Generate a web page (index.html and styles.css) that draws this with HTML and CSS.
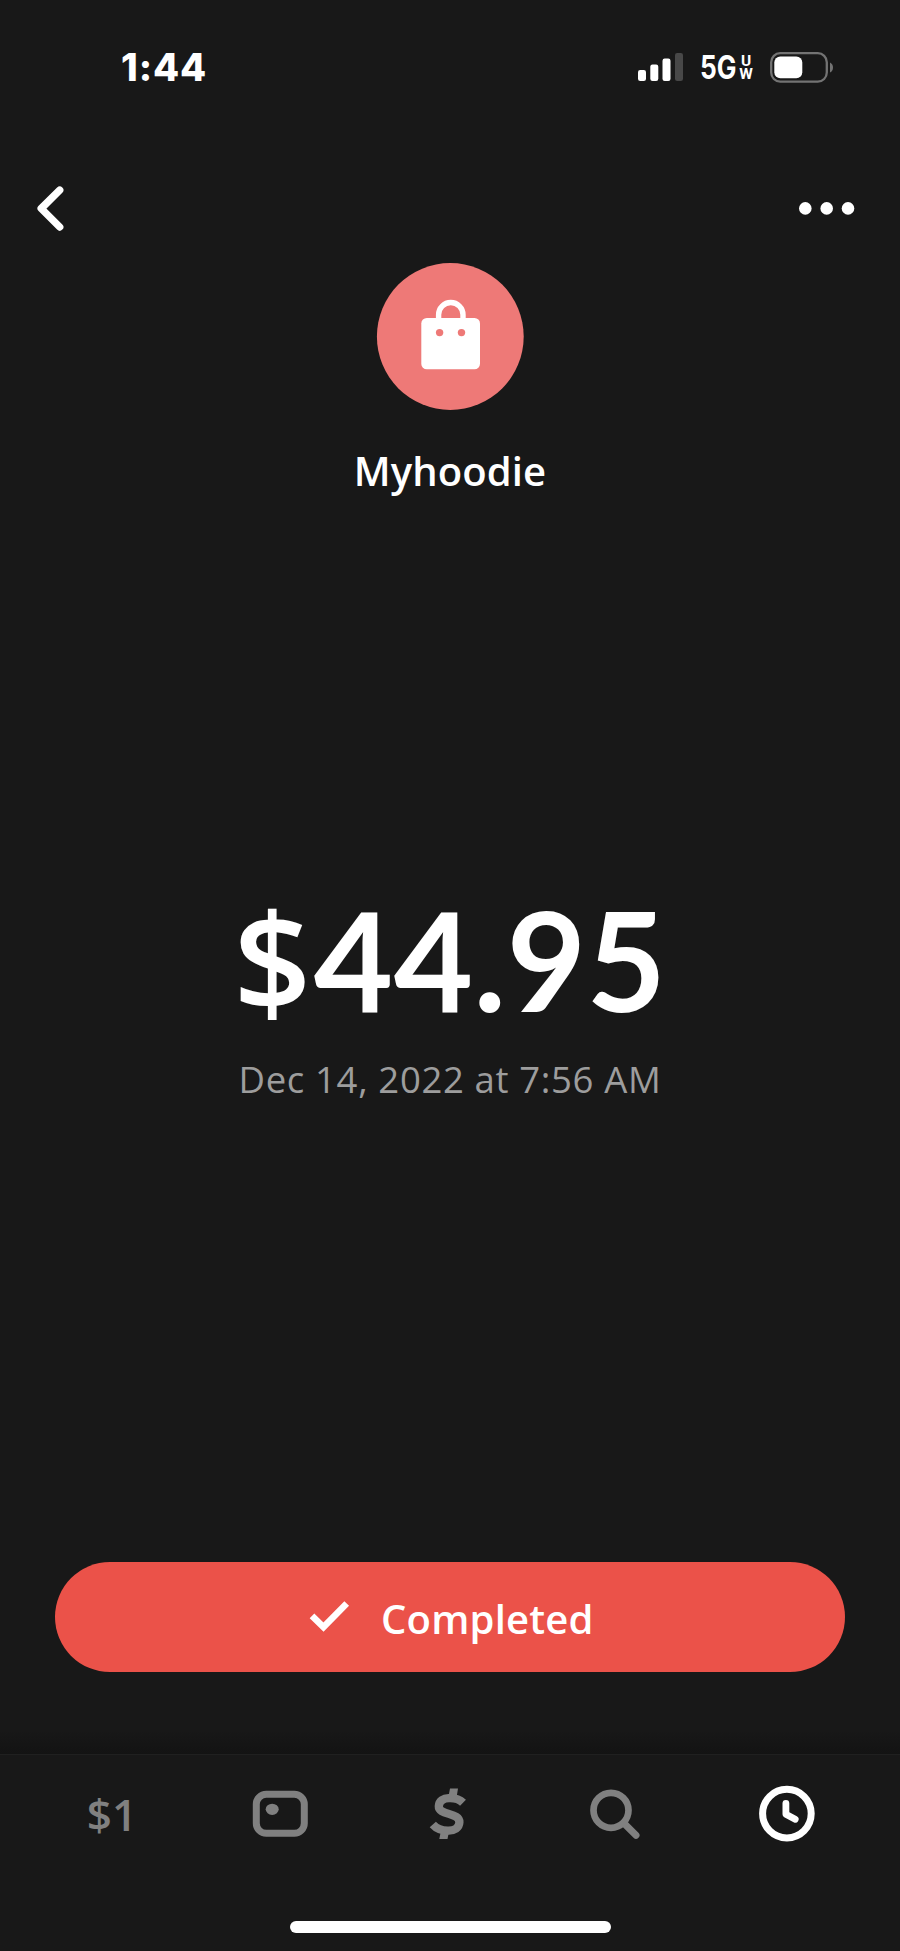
FILE: index.html
```html
<!DOCTYPE html>
<html lang="en">
<head>
<meta charset="utf-8">
<meta name="viewport" content="width=device-width, initial-scale=1">
<title>Payment details</title>
<link rel="stylesheet" href="styles.css">
</head>
<body>
<div class="screen">
  <header class="status">
    <span class="time">1:44</span>
    <div class="indicators">
      <svg class="signal" width="46" height="30" viewBox="0 0 46 30" fill="#fff">
        <rect x="0" y="18" width="8" height="11" rx="2.2"/>
        <rect x="12.3" y="12.5" width="8" height="16.5" rx="2.2"/>
        <rect x="24.5" y="6.5" width="8" height="22.5" rx="2.2"/>
        <rect x="37" y="1" width="8" height="28" rx="2.2" fill="#484848"/>
      </svg>
      <div class="network"><span class="gen">5G</span><span class="uw"><span>U</span><span>W</span></span></div>
      <svg class="battery" width="64" height="32" viewBox="0 0 64 32">
        <rect x="1.2" y="2.2" width="55.6" height="28.4" rx="9" fill="none" stroke="#737373" stroke-width="2.3"/>
        <rect x="4.3" y="5.5" width="28" height="21.8" rx="6" fill="#fff"/>
        <path d="M60 11.5q3 1.5 3 5t-3 5z" fill="#737373"/>
      </svg>
    </div>
  </header>
  <nav class="topbar">
    <svg width="40" height="52" viewBox="30 182 40 52"><path d="M59.7 190.2 41.2 208.5 59.7 227" fill="none" stroke="#fff" stroke-width="7.4" stroke-linecap="round" stroke-linejoin="round"/></svg>
    <svg width="60" height="52" viewBox="797 182 60 52" fill="#fff"><circle cx="805.3" cy="208.4" r="6.3"/><circle cx="826.7" cy="208.4" r="6.3"/><circle cx="848" cy="208.4" r="6.3"/></svg>
  </nav>
  <main class="details">
    <svg class="avatar" width="148" height="148" viewBox="376 262 148 148">
      <circle cx="450.3" cy="336.5" r="73.4" fill="#ee7977"/>
      <path d="M438.6 321v-6.3a12.2 12.2 0 0 1 24.4 0v6.3" fill="none" stroke="#fff" stroke-width="5.4"/>
      <rect x="421.3" y="318" width="58.7" height="51.3" rx="5.5" fill="#fff"/>
      <circle cx="439.6" cy="332.6" r="3.7" fill="#ee7977"/><circle cx="461.5" cy="332.6" r="3.7" fill="#ee7977"/>
    </svg>
    <h1 class="merchant">Myhoodie</h1>
    <div class="amount"><span class="currency">$</span>44.95</div>
    <div class="date">Dec 14, 2022 at 7:56 AM</div>
    <button class="completed">
      <svg width="42" height="34" viewBox="308 1599 42 34"><path d="M312 1614.8 323.5 1626 346.7 1602.5" fill="none" stroke="#fff" stroke-width="6.6"/></svg>
      <span>Completed</span>
    </button>
  </main>
  <nav class="tabs">
    <div class="tab balance">$1</div>
    <div class="tab"><svg width="60" height="60" viewBox="0 0 60 60"><rect x="5.3" y="10.3" width="48" height="39" rx="10" fill="none" stroke="#808080" stroke-width="7"/><ellipse cx="21.2" cy="25.3" rx="6.5" ry="5.6" fill="#808080"/></svg></div>
    <div class="tab"><svg width="60" height="60" viewBox="0 0 60 60" fill="none" stroke="#808080"><path d="M43 18.7C37 12.7 19.3 11.2 18.8 22.2C18.4 31.5 39.8 28.3 39.4 38.3C38.8 49.5 20 48.5 12.8 40.5" stroke-width="8.3"/><path d="M38 4.5h-8L28.6 12h8.2zM19.3 55h8.2l1.4-7h-8.2z" fill="#808080" stroke="none"/></svg></div>
    <div class="tab"><svg width="60" height="60" viewBox="0 0 60 60" fill="none" stroke="#808080"><circle cx="22" cy="26.3" r="17.5" stroke-width="6.7"/><path d="M34.7 39 47 51.3" stroke-width="7" stroke-linecap="round"/></svg></div>
    <div class="tab"><svg width="60" height="60" viewBox="0 0 60 60" fill="none" stroke="#fff"><circle cx="28.9" cy="29.6" r="24.3" stroke-width="7"/><path d="M27.9 19.3V30.2L37.2 35.3" stroke-width="6.8" stroke-linecap="round" stroke-linejoin="round"/></svg></div>
  </nav>
  <div class="home"></div>
</div>
</body>
</html>
```
FILE: styles.css
```css
* { box-sizing: border-box; }
body { margin: 0; background: #181818; color: #fff; font-family: "Open Sans", "Liberation Sans", sans-serif; }
svg { display: block; flex: none; }
.screen { width: 900px; height: 1951px; display: flex; flex-direction: column; overflow: hidden; background: #181818; }
.status { height: 182px; padding: 46px 0 0 121px; display: flex; justify-content: space-between; align-items: flex-start; }
.time { font: 800 38px/42px Inter, sans-serif; letter-spacing: .9px; }
.indicators { display: flex; padding-top: 5px; width: 262px; }
.signal { margin-top: 1px; }
.network { display: flex; height: 34px; width: 70px; margin: 0 0 0 16px; }
.gen { display: block; width: 37px; font: 700 32px/34px Inter, sans-serif; transform: scaleX(.82); transform-origin: left; }
.uw { display: flex; flex-direction: column; width: 18px; font: 700 15.5px/13px Roboto, sans-serif; align-items: center; padding-top: 4px; }
.topbar { height: 80px; padding: 0 43px 0 30px; display: flex; justify-content: space-between; }
.details { height: 1492px; display: flex; flex-direction: column; align-items: center; background: linear-gradient(#181818 98.4%, #131313); }
.merchant { margin: 37px 0 0; font-size: 40px; line-height: 48px; font-weight: 650; letter-spacing: .1px; }
.amount { margin-top: 384px; font: 700 137px/160px Lato, sans-serif; letter-spacing: .5px; }
.currency { display: inline-block; margin-right: 2px; font-family: "Open Sans", sans-serif; font-size: 136px; font-weight: 600; line-height: 1px; }
.date { margin-top: 18px; font-size: 36.5px; line-height: 44px; letter-spacing: .65px; color: #9d9d9d; }
.completed { width: 790px; height: 110px; margin-top: 461px; padding: 0 0 0 253px; border: 0; border-radius: 55px; background: #eb5249; color: #fff; display: flex; align-items: center; font: 650 40px/50px "Open Sans", sans-serif; }
.completed span { margin: 4px 0 0 31px; letter-spacing: .2px; }
.tabs { height: 167px; padding: 29px 27.5px 0; display: flex; border-top: 1px solid #202020; align-items: flex-start; }
.tab { flex: 1; height: 60px; display: flex; justify-content: center; align-items: center; }
.balance { color: #808080; font-size: 44px; font-weight: 600; }
.home { width: 321px; height: 12px; border-radius: 6px; background: #fff; margin-left: 290px; }
```
